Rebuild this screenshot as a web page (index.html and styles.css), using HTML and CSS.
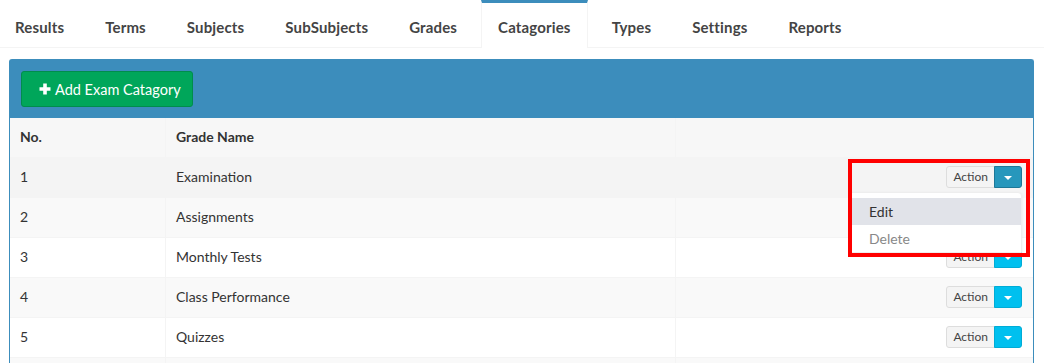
FILE: index.html
```html
<!DOCTYPE html>
<html lang="en">
<head>
  <meta charset="UTF-8">
  <title>Exam Catagories</title>
  <link rel="stylesheet" href="styles.css">
</head>
<body>

  <!-- Tabs -->
  <ul class="nav-tabs">
    <li><a href="#">Results</a></li>
    <li><a href="#">Terms</a></li>
    <li><a href="#">Subjects</a></li>
    <li><a href="#">SubSubjects</a></li>
    <li><a href="#">Grades</a></li>
    <li class="active"><a href="#">Catagories</a></li>
    <li><a href="#">Types</a></li>
    <li><a href="#">Settings</a></li>
    <li><a href="#">Reports</a></li>
  </ul>

  <div class="box">
    <div class="box-header">
      <button class="btn-add">
        <svg class="plus" width="12" height="12" viewBox="0 0 12 12"><path d="M6 0.5v11M0.5 6h11" stroke="#fff" stroke-width="3.6"/></svg>
        Add Exam Catagory
      </button>
    </div>

    <table class="table">
      <thead>
        <tr>
          <th class="col-no">No.</th>
          <th class="col-name">Grade Name</th>
          <th></th>
        </tr>
      </thead>
      <tbody>
        <tr class="hover">
          <td>1</td>
          <td>Examination</td>
          <td class="actions">
            <div class="btn-group open">
              <button class="btn-action">Action</button>
              <button class="btn-caret"><span class="caret"></span></button>
              <ul class="dropdown-menu">
                <li class="active-item"><a href="#">Edit</a></li>
                <li><a href="#" class="muted">Delete</a></li>
              </ul>
              <!-- annotation -->
              <div class="highlight"></div>
            </div>
          </td>
        </tr>
        <tr>
          <td>2</td>
          <td>Assignments</td>
          <td class="actions">
            <div class="btn-group">
              <button class="btn-action">Action</button>
              <button class="btn-caret"><span class="caret"></span></button>
            </div>
          </td>
        </tr>
        <tr>
          <td>3</td>
          <td>Monthly Tests</td>
          <td class="actions">
            <div class="btn-group">
              <button class="btn-action">Action</button>
              <button class="btn-caret"><span class="caret"></span></button>
            </div>
          </td>
        </tr>
        <tr>
          <td>4</td>
          <td>Class Performance</td>
          <td class="actions">
            <div class="btn-group">
              <button class="btn-action">Action</button>
              <button class="btn-caret"><span class="caret"></span></button>
            </div>
          </td>
        </tr>
        <tr>
          <td>5</td>
          <td>Quizzes</td>
          <td class="actions">
            <div class="btn-group">
              <button class="btn-action">Action</button>
              <button class="btn-caret"><span class="caret"></span></button>
            </div>
          </td>
        </tr>
        <tr>
          <td></td>
          <td></td>
          <td></td>
        </tr>
      </tbody>
    </table>
  </div>

</body>
</html>
```

FILE: styles.css
```css
body {
  margin: 0;
  padding: 0 10px 0 9px;
  font-family: 'Lato', 'Liberation Sans', sans-serif;
  font-size: 14px;
  color: #333;
  background: #fff;
  overflow: hidden;
}

/* Tabs */
.nav-tabs {
  list-style: none;
  margin: 0 -10px 0 -11px;
  padding: 0;
  display: flex;
  border-bottom: 1px solid #f4f4f4;
}

.nav-tabs li {
  margin-right: 7px;
}

.nav-tabs a {
  display: block;
  height: 44px;
  line-height: 48px;
  padding: 0 16px;
  border: 1px solid transparent;
  border-top: 3px solid transparent;
  border-bottom: 0;
  color: #444;
  font-size: 15px;
  letter-spacing: 0.15px;
  font-weight: bold;
  text-decoration: none;
}

.nav-tabs .active a {
  border-top-color: #3c8dbc;
  border-left-color: #f4f4f4;
  border-right-color: #f4f4f4;
  background: #fff;
  margin-bottom: -1px;
  height: 45px;
}

/* Box */
.box {
  margin-top: 11px;
  border: 1px solid #3c8dbc;
  border-bottom: 0;
  border-radius: 3px 3px 0 0;
}

.box-header {
  background: #3c8dbc;
  padding: 11px 11px 11px;
}

.btn-add {
  display: flex;
  align-items: center;
  gap: 4px;
  height: 36px;
  padding: 0 11px 0 17px;
  background: #00a65a;
  border: 1px solid #008d4c;
  border-radius: 3px;
  color: #fff;
  font-family: inherit;
  font-size: 14.5px;
}

/* Table */
.table {
  width: 100%;
  border-collapse: collapse;
}

.table th,
.table td {
  height: 36px;
  padding: 0 10px 3px;
  text-align: left;
  border-top: 1px solid #f4f4f4;
  border-left: 1px solid #f4f4f4;
}

.table th:first-child,
.table td:first-child {
  border-left: 0;
}

.table thead th {
  border-top: 0;
  background: #f7f7f7;
  font-weight: bold;
  color: #333;
}

.col-no {
  width: 135px;
}

.col-name {
  width: 489px;
}

.table tbody tr:nth-child(even) {
  background: #f9f9f9;
}

.table tbody tr.hover {
  background: #f4f4f4;
}

.table td.actions {
  text-align: right;
  padding: 0 11px 2px 10px;
}

.btn-group {
  position: relative;
  display: inline-flex;
  vertical-align: middle;
}

.btn-action,
.btn-caret {
  height: 22px;
  font-family: inherit;
  font-size: 12px;
  margin: 0;
}

.btn-action {
  padding: 0 6px;
  background: #f4f4f4;
  border: 1px solid #ddd;
  border-radius: 3px 0 0 3px;
  color: #444;
}

.btn-caret {
  width: 28px;
  margin-left: -1px;
  background: #00c0ef;
  border: 1px solid #00acd6;
  border-radius: 0 3px 3px 0;
}

.open .btn-caret {
  background: #2797bc;
  border-color: #1d7898;
}

.caret {
  display: inline-block;
  border-top: 4px solid #fff;
  border-left: 4px solid transparent;
  border-right: 4px solid transparent;
  vertical-align: middle;
}

.dropdown-menu {
  position: absolute;
  top: 100%;
  right: 0;
  z-index: 5;
  width: 170px;
  margin: 4px 0 0;
  padding: 5px 0 0;
  list-style: none;
  text-align: left;
  background: #fff;
  border: 1px solid #eee;
  border-radius: 0 4px 0 0;
  box-shadow: 0 1px 3px rgba(0, 0, 0, 0.08);
}

.dropdown-menu a {
  display: block;
  height: 27px;
  line-height: 28px;
  padding: 0 18px;
  font-size: 14px;
  color: #333;
  text-decoration: none;
}

.dropdown-menu .active-item a {
  background: #e1e3e9;
}

.dropdown-menu a.muted {
  color: #888;
}

/* red annotation frame */
.highlight {
  position: absolute;
  top: -7px;
  right: -8px;
  width: 174px;
  height: 90px;
  border: 4px solid #ff0000;
  z-index: 6;
  pointer-events: none;
}
```
